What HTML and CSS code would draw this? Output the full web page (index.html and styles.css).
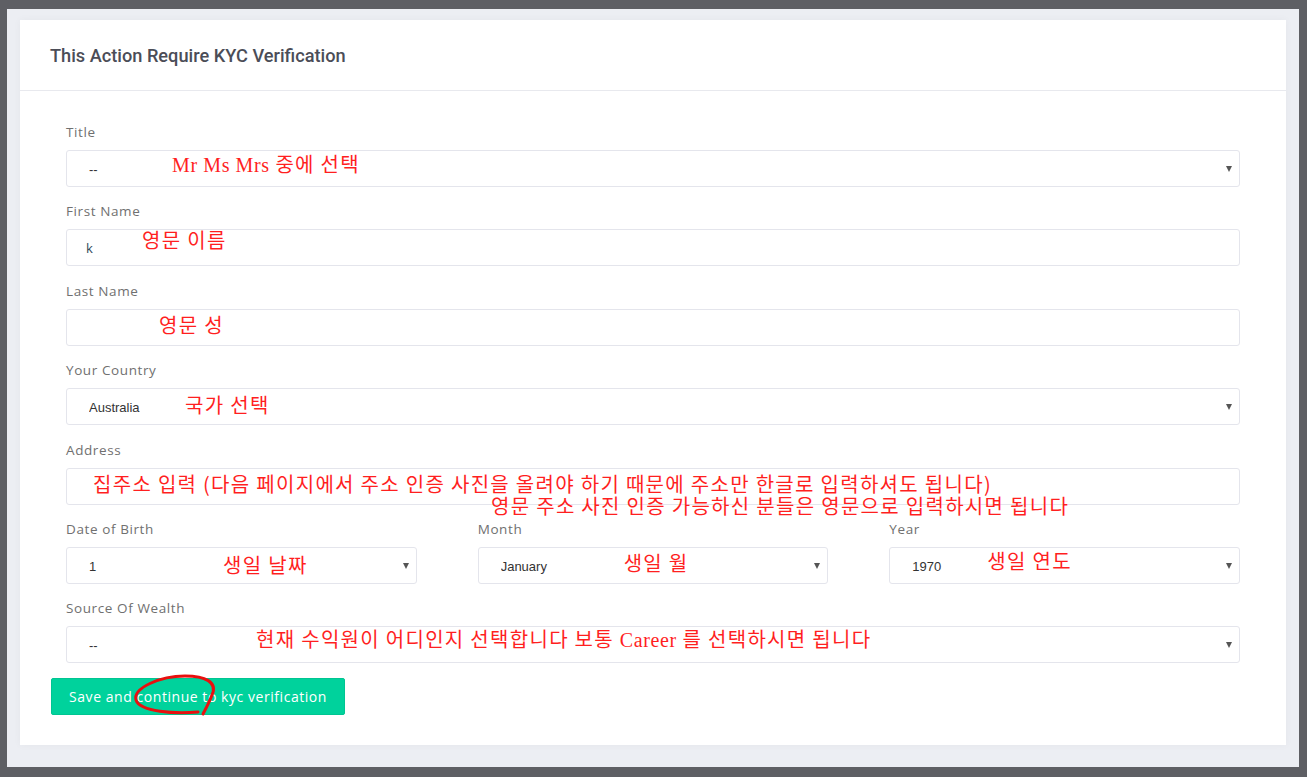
FILE: index.html
```html
<!DOCTYPE html>
<html lang="en">

<head>
    <meta charset="UTF-8">
    <meta name="viewport" content="width=device-width, initial-scale=1.0">
    <title>KYC Verification</title>
    <link rel="stylesheet" href="styles.css">
</head>

<body>
    <div class="frame">
        <div class="card">
            <div class="card-header">
                <h4 class="card-title">This Action Require KYC Verification</h4>
            </div>
            <div class="card-body">
                <div class="group">
                    <label>Title</label>
                    <div class="select-wrap">
                        <select class="field"><option>--</option></select>
                    </div>
                    <span class="note" style="left:106px;top:30px"><span class="latin">Mr Ms Mrs</span> 중에 선택</span>
                </div>
                <div class="group">
                    <label>First Name</label>
                    <input class="field" type="text" value="k">
                    <span class="note" style="left:76px;top:27px">영문 이름</span>
                </div>
                <div class="group">
                    <label>Last Name</label>
                    <input class="field" type="text">
                    <span class="note" style="left:93px;top:32px">영문 성</span>
                </div>
                <div class="group">
                    <label>Your Country</label>
                    <div class="select-wrap">
                        <select class="field"><option>Australia</option></select>
                    </div>
                    <span class="note" style="left:119px;top:33px">국가 선택</span>
                </div>
                <div class="group">
                    <label>Address</label>
                    <input class="field" type="text">
                    <span class="note" style="left:27px;top:32px">집주소 입력 (다음 페이지에서 주소 인증 사진을 올려야 하기 때문에 주소만 한글로 입력하셔도 됩니다)</span>
                    <span class="note" style="left:425px;top:54px">영문 주소 사진 인증 가능하신 분들은 영문으로 입력하시면 됩니다</span>
                </div>
                <div class="group row">
                    <div class="col">
                        <label>Date of Birth</label>
                        <div class="select-wrap">
                            <select class="field"><option>1</option></select>
                        </div>
                        <span class="note" style="left:157px;top:34px">생일 날짜</span>
                    </div>
                    <div class="col">
                        <label>Month</label>
                        <div class="select-wrap">
                            <select class="field"><option>January</option></select>
                        </div>
                        <span class="note" style="left:146px;top:32px">생일 월</span>
                    </div>
                    <div class="col">
                        <label>Year</label>
                        <div class="select-wrap">
                            <select class="field"><option>1970</option></select>
                        </div>
                        <span class="note" style="left:98px;top:30px">생일 연도</span>
                    </div>
                </div>
                <div class="group">
                    <label>Source Of Wealth</label>
                    <div class="select-wrap">
                        <select class="field"><option>--</option></select>
                    </div>
                    <span class="note" style="left:190px;top:29px">현재 수익원이 어디인지 선택합니다 보통 <span class="latin">Career</span> 를 선택하시면 됩니다</span>
                </div>
                <div class="actions">
                    <button class="btn-save">Save and continue to kyc verification</button>
                    <svg class="scribble" width="300" height="40" viewBox="0 0 300 40">
                        <path d="M147 34 C124 36 89 34 85 22 C82 10 109 -2 134 -2 C154 -2 167 4 161 17 C158 25 154 32 152 36"
                            fill="none" stroke="#e8100f" stroke-width="3" stroke-linecap="round" />
                    </svg>
                </div>
            </div>
        </div>
    </div>
</body>

</html>
```

FILE: styles.css
```css
html,
body {
    margin: 0;
    height: 777px;
    overflow: hidden;
}

body {
    background-color: #5e5f64;
    font-family: "Open Sans", Arial, sans-serif;
}

.frame {
    margin: 9px 8px 0 7px;
    height: 758px;
    box-sizing: border-box;
    background-color: #eceef3;
    padding: 11px 13px 0 13px;
}

.card {
    background-color: #fff;
    height: 725px;
    box-shadow: 0 0 8px rgba(0, 0, 0, 0.04);
}

.card-header {
    height: 70px;
    border-bottom: 1px solid #e8e9ee;
    padding: 0 30px;
    display: flex;
    align-items: center;
}

.card-title {
    margin: 0;
    font-family: Roboto, Arial, sans-serif;
    font-weight: 500;
    font-size: 18.2px;
    color: #4b4d57;
}

.card-body {
    padding: 31px 31px 0 31px;
}

.group {
    position: relative;
    margin: 0 15px 14.4px 15px;
}

.group label {
    display: block;
    font-size: 13.5px;
    letter-spacing: 0.6px;
    line-height: 20px;
    color: #707070;
    margin-bottom: 8px;
}

.row {
    display: grid;
    grid-template-columns: 1fr 1fr 1fr;
    gap: 61px;
}

.col {
    position: relative;
}

.field {
    display: block;
    width: 100%;
    height: 37px;
    box-sizing: border-box;
    border: 1px solid #e4e5ec;
    border-radius: 3px;
    background-color: #fff;
    padding: 0 22px;
    font-family: "Liberation Sans", Arial, sans-serif;
    font-size: 13px;
    color: #333;
    outline: none;
}

input.field {
    padding-left: 19px;
    font-family: "Open Sans", Arial, sans-serif;
    color: #2f4a5a;
}

select.field {
    appearance: none;
    -webkit-appearance: none;
    padding-top: 2px;
}

.select-wrap {
    position: relative;
}

.select-wrap::after {
    content: "";
    position: absolute;
    right: 8px;
    top: 16px;
    border-left: 3.5px solid transparent;
    border-right: 3.5px solid transparent;
    border-top: 6px solid #555;
}

.note {
    position: absolute;
    white-space: nowrap;
    font-family: "Noto Sans CJK KR", sans-serif;
    font-size: 20px;
    letter-spacing: 1.3px;
    line-height: 24px;
    color: #ff1f1f;
}

.latin {
    font-family: "Liberation Serif", serif;
    letter-spacing: 0.6px;
}

.actions {
    position: relative;
    padding-top: 0.6px;
}

.btn-save {
    width: 294px;
    height: 37px;
    background-color: #00d29c;
    border: 1px solid #00c592;
    border-radius: 2px;
    color: #fff;
    font-family: "Open Sans", Arial, sans-serif;
    font-size: 14px;
    letter-spacing: 0.55px;
    cursor: pointer;
}

.scribble {
    position: absolute;
    left: 0;
    top: 0;
    overflow: visible;
}
```
